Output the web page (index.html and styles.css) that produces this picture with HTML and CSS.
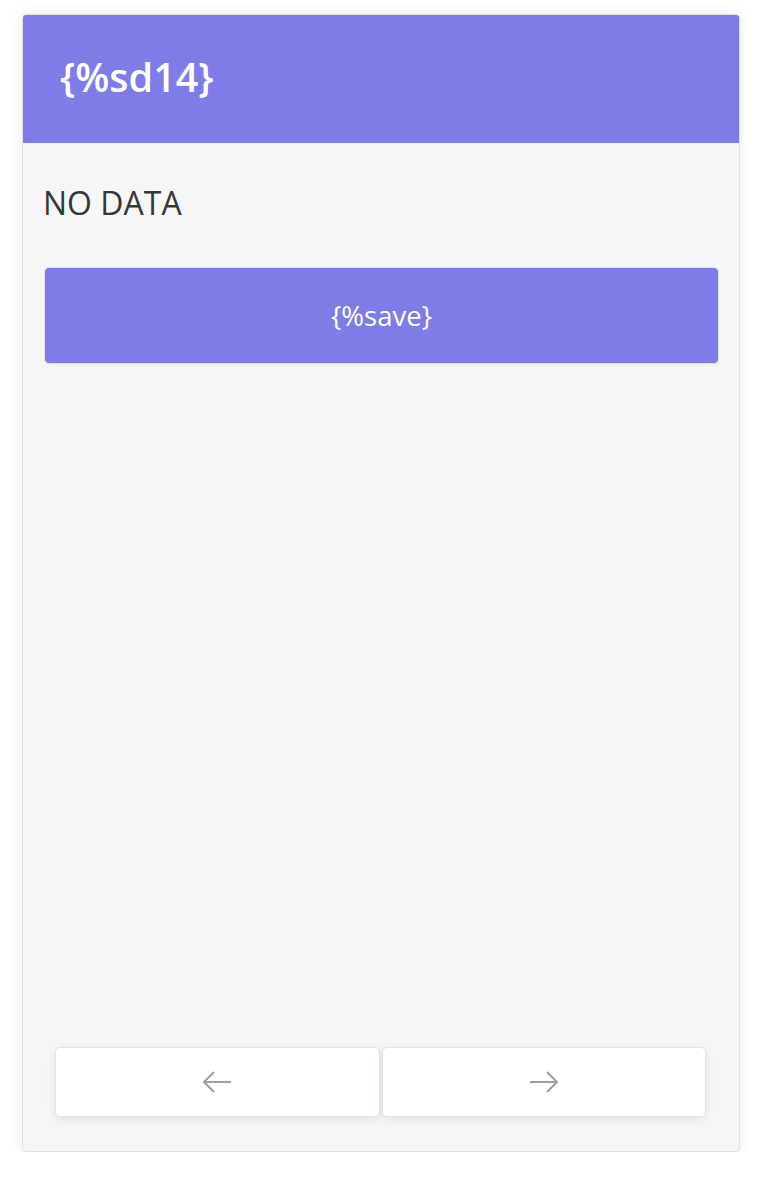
FILE: index.html
```html
<!DOCTYPE html>
<html>
<head>
<meta charset="utf-8">
<link rel="stylesheet" href="styles.css">
</head>
<body>
<div class="card">
  <header class="card-header">
    <h1 class="title">{%sd14}</h1>
  </header>
  <main class="content">
    <p class="empty">NO DATA</p>
    <button class="save-btn">{%save}</button>
  </main>
  <nav class="pager">
    <button class="nav-btn" aria-label="previous">
      <svg width="30" height="24" viewBox="0 0 30 24"><path d="M29 12H3M12 2L2 12l10 10" fill="none" stroke="#9e9e9e" stroke-width="2"/></svg>
    </button>
    <button class="nav-btn" aria-label="next">
      <svg width="30" height="24" viewBox="0 0 30 24"><path d="M1 12h26M18 2l10 10-10 10" fill="none" stroke="#9e9e9e" stroke-width="2"/></svg>
    </button>
  </nav>
</div>
</body>
</html>
```

FILE: styles.css
```css
* { box-sizing: border-box; }
html, body { margin: 0; padding: 0; background: #fff; }
body {
  font-family: "Open Sans", "Noto Sans", sans-serif;
  padding: 14px 20px 0 22px;
}
.card {
  width: 718px;
  height: 1138px;
  background: #f6f6f6;
  border: 1px solid #e0e0e0;
  border-radius: 4px;
  box-shadow: 0 0 14px rgba(0,0,0,0.08);
  display: flex;
  flex-direction: column;
  overflow: hidden;
}
.card-header {
  height: 128px;
  background: #7f7ce8;
  display: flex;
  align-items: center;
  padding-left: 37px;
}
.title {
  margin: 0;
  color: #fff;
  font-size: 39.5px;
  font-weight: 600;
  line-height: 1;
  position: relative;
  top: -1px;
}
.content {
  flex: 1;
  padding: 38px 21px 0 20px;
}
.empty {
  margin: 0;
  font-size: 32px;
  line-height: 44px;
  color: #363636;
}
.save-btn {
  display: block;
  width: 100%;
  height: 97px;
  margin-top: 42px;
  margin-left: 1px;
  background: #7f7ce8;
  border: 1px solid #e3e3e3;
  border-radius: 5px;
  color: #fff;
  font-family: inherit;
  font-size: 27.5px;
}
.pager {
  display: flex;
  gap: 2px;
  padding: 0 33px 34px 32px;
}
.nav-btn {
  flex: 1;
  height: 70px;
  background: #fff;
  border: 1px solid #e2e2e2;
  border-radius: 5px;
  box-shadow: 0 3px 10px rgba(0,0,0,0.08);
  display: flex;
  align-items: center;
  justify-content: center;
  padding: 0;
}
.nav-btn svg { display: block; }
```
